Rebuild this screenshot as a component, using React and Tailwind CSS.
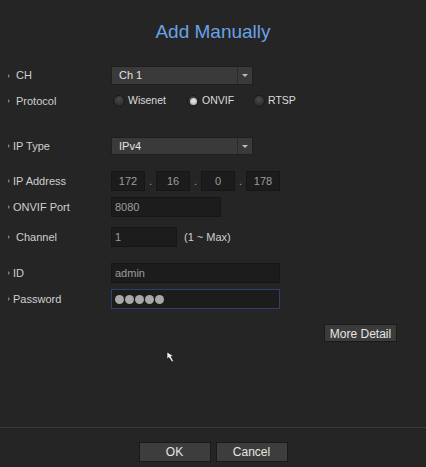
import React from "react";

const font = { fontFamily: '"Liberation Sans", Arial, sans-serif' };

function Label({ children, indent = false }) {
  return (
    <div className="w-[111px] shrink-0 flex items-center h-full pl-[8px]">
      <span className="w-0 h-0 border-y-[2px] border-y-transparent border-l-[2px] border-l-[#7a7a7a] mr-[3px]" />
      <span className={`text-[11px] text-[#cfcfcf] ${indent ? "ml-[3px]" : ""}`}>{children}</span>
    </div>
  );
}

function Dropdown({ value }) {
  return (
    <div className="w-[142px] h-full flex bg-[#3a3a3a] border border-[#1f1f1f]">
      <div className="flex-1 flex items-center pl-[7px] text-[11px] text-[#e4e4e4]">{value}</div>
      <div className="w-[15px] border-l border-[#2a2a2a] flex items-center justify-center">
        <span className="w-0 h-0 border-x-[3px] border-x-transparent border-t-[3px] border-t-[#bdbdbd]" />
      </div>
    </div>
  );
}

function Box({ w, children, center = false }) {
  return (
    <div
      className={`h-full flex items-center bg-[#1c1c1c] border border-[#161616] text-[11px] text-[#9c9c9c] ${center ? "justify-center" : "pl-[3px]"}`}
      style={{ width: w }}
    >
      {children}
    </div>
  );
}

function Radio({ checked, label }) {
  return (
    <div className="flex items-center">
      <span className="w-[12px] h-[12px] rounded-full bg-[radial-gradient(circle_at_50%_35%,#4a4a4a,#222222)] border border-[#1a1a1a] flex items-center justify-center">
        {checked && <span className="w-[7px] h-[7px] rounded-full bg-[radial-gradient(circle_at_50%_40%,#eeeeee,#a0a0a0)]" />}
      </span>
      <span className="ml-[3px] text-[10.5px] text-[#dcdcdc]">{label}</span>
    </div>
  );
}

export default function App() {
  return (
    <div className="w-[426px] h-[467px] bg-[#252525] flex flex-col relative overflow-hidden" style={font}>
      <div className="h-[66px] pt-[20px] text-center">
        <div className="leading-[24px] text-[19px] text-[#6aa2e6]">Add Manually</div>
      </div>

      <div className="h-[19px] flex">
        <Label indent>CH</Label>
        <Dropdown value="Ch 1" />
      </div>

      <div className="h-[18px] mt-[7px] flex">
        <Label indent>Protocol</Label>
        <div className="flex items-center pl-[2px]">
          <div className="w-[74px]"><Radio label="Wisenet" /></div>
          <div className="w-[66px]"><Radio checked label="ONVIF" /></div>
          <Radio label="RTSP" />
        </div>
      </div>

      <div className="h-[18px] mt-[27px] flex">
        <Label>IP Type</Label>
        <Dropdown value="IPv4" />
      </div>

      <div className="h-[20px] mt-[16px] flex">
        <Label>IP Address</Label>
        <div className="flex items-center h-full">
          <Box w={34} center>172</Box>
          <span className="w-[11px] text-center text-[11px] text-[#9c9c9c]">.</span>
          <Box w={34} center>16</Box>
          <span className="w-[11px] text-center text-[11px] text-[#9c9c9c]">.</span>
          <Box w={34} center>0</Box>
          <span className="w-[11px] text-center text-[11px] text-[#9c9c9c]">.</span>
          <Box w={34} center>178</Box>
        </div>
      </div>

      <div className="h-[20px] mt-[6px] flex">
        <Label>ONVIF Port</Label>
        <Box w={110}>8080</Box>
      </div>

      <div className="h-[20px] mt-[10px] flex">
        <Label indent>Channel</Label>
        <Box w={66}>1</Box>
        <span className="ml-[7px] self-center text-[11px] text-[#cfcfcf]">(1 ~ Max)</span>
      </div>

      <div className="h-[20px] mt-[16px] flex">
        <Label>ID</Label>
        <Box w={169}>admin</Box>
      </div>

      <div className="h-[20px] mt-[6px] flex">
        <Label>Password</Label>
        <div className="w-[169px] h-full flex items-center gap-[1px] pl-[3px] bg-[#1c1c1c] border border-[#2e3f6e]">
          {[0, 1, 2, 3, 4].map((i) => (
            <span key={i} className="w-[9px] h-[9px] rounded-full bg-[#a8a8a8]" />
          ))}
        </div>
      </div>

      <div className="h-[18px] mt-[15px] flex justify-end pr-[29px]">
        <button className="w-[73px] h-full bg-[#3b3b3b] border border-[#1a1a1a] text-[12px] text-[#e6e6e6]">
          More Detail
        </button>
      </div>

      <div className="flex-1" />

      <div className="border-t border-[#3a3a3a] pt-[14px] pb-[5px] flex justify-center gap-[5px]">
        <button className="w-[72px] h-[20px] bg-[#3d3d3d] border border-[#1a1a1a] text-[12px] text-[#e6e6e6]">OK</button>
        <button className="w-[72px] h-[20px] bg-[#3d3d3d] border border-[#1a1a1a] text-[12px] text-[#e6e6e6]">Cancel</button>
      </div>

      <svg className="absolute left-[166px] top-[351px]" width="12" height="13" viewBox="0 0 12 13">
        <path d="M1 1 L1 8 L3 6.5 L6 11 L7.5 10 L5 5.5 L8 5.5 Z" fill="#f0f0f0" stroke="#111" strokeWidth="0.6" />
      </svg>
    </div>
  );
}
